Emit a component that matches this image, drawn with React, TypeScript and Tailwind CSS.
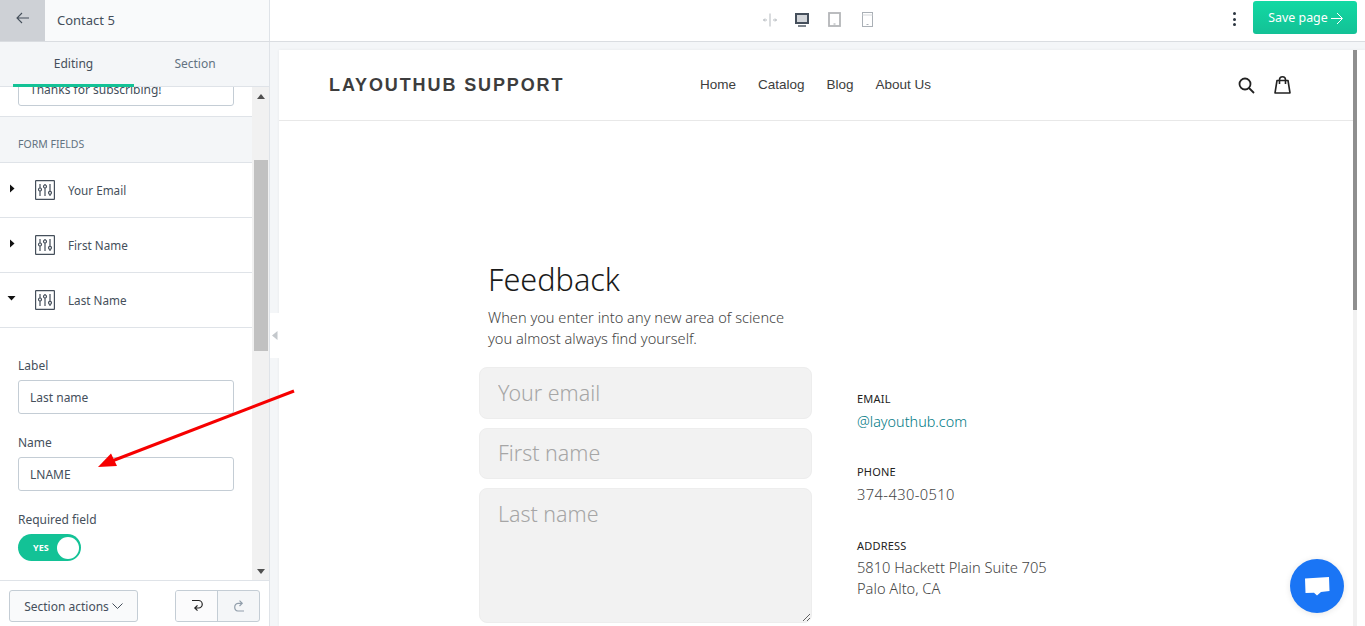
import React from "react";

const Sliders = () => (
  <svg width="20" height="20" viewBox="0 0 20 20" fill="none" stroke="#454f5b" className="shrink-0">
    <rect x="0.6" y="0.6" width="18.8" height="18.8" rx="0.5" strokeWidth="1.2" />
    <g strokeWidth="1.2">
      <path d="M5 4v4M5 11v5M10 4v1M10 8v8M15 4v7M15 14v2" />
      <circle cx="5" cy="9.5" r="1.5" />
      <circle cx="10" cy="6.5" r="1.5" />
      <circle cx="15" cy="12.8" r="1.5" />
    </g>
  </svg>
);

const Row = ({ label, open }: { label: string; open?: boolean }) => (
  <div className="flex h-[55px] items-center border-b border-[#dfe3e8]">
    <div className="flex w-[35px] shrink-0 justify-start pb-[4px] pl-[7px]">
      {open ? (
        <svg width="9" height="6" viewBox="0 0 9 6"><path d="M0.5 1h8L4.5 5.5z" fill="#111" /></svg>
      ) : (
        <svg width="6" height="9" viewBox="0 0 6 9" className="ml-[2px]"><path d="M1 0.5v8L5.5 4.5z" fill="#111" /></svg>
      )}
    </div>
    <Sliders />
    <span className="ml-[13px] pt-[2px] text-[11.7px] text-[#454f5b]">{label}</span>
  </div>
);

const TextInput = ({ value }: { value: string }) => (
  <input
    readOnly
    value={value}
    className="block h-[34px] w-[216px] rounded-[3px] border border-[#c4cdd5] bg-white px-[11px] text-[12px] text-[#454f5b] outline-none"
  />
);

const Field = ({ label, value, className }: { label: string; value: string; className?: string }) => (
  <div className={className}>
    <div className="mb-[6px] text-[12px] leading-[17px] text-[#454f5b]">{label}</div>
    <TextInput value={value} />
  </div>
);

const Info = ({ title, children, className }: { title: string; children: React.ReactNode; className?: string }) => (
  <div className={className}>
    <div className="text-[11px] font-normal leading-[16px] tracking-[0.2px] text-[#222]">{title}</div>
    {children}
  </div>
);

export default function App() {
  return (
    <div className="relative flex h-[626px] w-[1365px] flex-col overflow-hidden bg-[#f4f6f8] font-['Noto_Sans',sans-serif]">
      {/* top bar */}
      <div className="flex h-[42px] shrink-0 border-b border-[#dadde1] bg-white">
        <div className="flex w-[270px] shrink-0 items-center border-r border-[#dfe3e8] bg-[#f9fafb]">
          <div className="flex h-[41px] w-[45px] items-center justify-center bg-[#ced1d6] pb-[6px]">
            <svg width="14" height="12" viewBox="0 0 14 12" fill="none" stroke="#454f5b" strokeWidth="1.1">
              <path d="M13 6H1M6 1L1 6l5 5" />
            </svg>
          </div>
          <span className="ml-[12px] text-[13px] text-[#454f5b]">Contact 5</span>
        </div>
        <div className="flex flex-1 items-center">
          <div className="mb-[2px] ml-[493px] flex items-center">
            <svg width="14" height="14" viewBox="0 0 14 14" fill="none" stroke="#b3b8bd" strokeWidth="1">
              <path d="M7 0.5v13M0.5 7h3.5M2 5.5L0.5 7 2 8.5M13.5 7H10M12 5.5L13.5 7 12 8.5" />
            </svg>
            <svg className="ml-[18px]" width="14" height="14" viewBox="0 0 14 14">
              <rect x="1" y="1" width="12" height="9" fill="#d3d6da" stroke="#454f5b" strokeWidth="2" />
              <path d="M3 13h8" stroke="#454f5b" strokeWidth="1.4" />
            </svg>
            <svg className="ml-[19px]" width="13" height="15" viewBox="0 0 13 15">
              <rect x="1" y="1" width="11" height="13" fill="none" stroke="#b4b6b9" strokeWidth="1.8" />
              <path d="M5.5 12h2" stroke="#a0a4a8" strokeWidth="1" />
            </svg>
            <svg className="ml-[21px]" width="11" height="15" viewBox="0 0 11 15" fill="none">
              <rect x="0.5" y="0.5" width="10" height="14" stroke="#aab0b6" strokeWidth="1" />
              <path d="M0.5 3h10" stroke="#d5d8db" strokeWidth="1" />
              <path d="M4.5 12.5h2" stroke="#aab0b6" strokeWidth="1" />
            </svg>
          </div>
          <div className="ml-auto flex items-center">
            <div className="mb-[3px] flex flex-col gap-[2.5px]">
              <span className="h-[3px] w-[3px] rounded-full bg-[#2b3540]" />
              <span className="h-[3px] w-[3px] rounded-full bg-[#2b3540]" />
              <span className="h-[3px] w-[3px] rounded-full bg-[#2b3540]" />
            </div>
            <div className="mb-[7px] ml-[17px] mr-[8px] flex h-[33px] w-[104px] items-center justify-center gap-[2px] rounded-[3px] bg-gradient-to-b from-[#12d9a3] to-[#13c196] pl-[1px] pt-[2px] text-[12.4px] text-white">
              Save page
              <svg width="13" height="13" viewBox="0 0 13 13" fill="none" stroke="white" strokeWidth="1">
                <path d="M1 6.5h11M7 1l5.5 5.5L7 12" />
              </svg>
            </div>
          </div>
        </div>
      </div>

      <div className="flex min-h-0 flex-1">
        {/* sidebar */}
        <div className="flex w-[270px] shrink-0 flex-col border-r border-[#dfe3e8] bg-white">
          <div className="relative flex h-[45px] shrink-0 border-b border-[#dfe3e8] bg-[#f4f6f8] px-[13px]">
            <div className="flex w-[121px] items-center justify-center text-[12px] text-[#454f5b]">Editing</div>
            <div className="flex w-[122px] items-center justify-center text-[12px] text-[#637381]">Section</div>
            <div className="absolute bottom-[-1px] left-[13px] h-[3px] w-[121px] bg-[#13c296]" />
          </div>
          <div className="flex min-h-0 flex-1 border-b border-[#dfe3e8]">
            <div className="min-w-0 flex-1 overflow-hidden">
              <div className="px-[18px]">
                <div className="h-[19px] overflow-hidden">
                  <div className="mt-[-15px]"><TextInput value="Thanks for subscribing!" /></div>
                </div>
              </div>
              <div className="mt-[10px] flex h-[47px] items-center border-y border-[#dfe3e8] bg-[#f4f6f8] px-[18px] pt-[11px] text-[10.5px] text-[#637381]">
                FORM FIELDS
              </div>
              <Row label="Your Email" />
              <Row label="First Name" />
              <Row label="Last Name" open />
              <div className="px-[18px] pt-[29px]">
                <Field label="Label" value="Last name" />
                <Field className="mt-[20px]" label="Name" value="LNAME" />
                <div className="mt-[20px] text-[12px] leading-[17px] text-[#454f5b]">Required field</div>
                <div className="mt-[6px] flex h-[27px] w-[63px] items-center rounded-full bg-[#13c296] pl-[15px] pr-[2px]">
                  <span className="text-[9px] font-bold text-white">YES</span>
                  <span className="ml-auto h-[22px] w-[22px] rounded-full bg-white" />
                </div>
              </div>
            </div>
            <div className="flex w-[17px] shrink-0 flex-col items-center bg-[#f1f1f1]">
              <svg className="mt-[7px]" width="8" height="5" viewBox="0 0 8 5"><path d="M0 5h8L4 0z" fill="#505050" /></svg>
              <div className="mt-[61px] h-[191px] w-[14px] bg-[#c1c1c1]" />
              <svg className="mb-[6px] mt-auto" width="8" height="5" viewBox="0 0 8 5"><path d="M0 0h8L4 5z" fill="#505050" /></svg>
            </div>
          </div>
          <div className="flex h-[45px] shrink-0 items-start bg-white pl-[9px] pt-[9px]">
            <div className="flex h-[32px] w-[129px] items-center justify-center gap-[3px] rounded-[3px] border border-[#c4cdd5] bg-[#f9fafb] pt-[1px] text-[12px] text-[#454f5b]">
              Section actions
              <svg width="11" height="7" viewBox="0 0 11 7" fill="none" stroke="#454f5b" strokeWidth="1"><path d="M0.5 0.5l5 5 5-5" /></svg>
            </div>
            <div className="ml-[37px] flex h-[32px] w-[85px] overflow-hidden rounded-[3px] border border-[#c4cdd5] bg-[#f4f6f8]">
              <div className="flex w-[42px] items-center justify-center border-r border-[#c4cdd5] bg-[#fbfbfc]">
                <svg width="12" height="14" viewBox="0 0 12 14" fill="none" stroke="#222" strokeWidth="1.2">
                  <path d="M1 1.5h6.5a3.6 3.6 0 0 1 0 7.5H4M6.5 6.3L3.8 9l2.7 2.7" />
                </svg>
              </div>
              <div className="flex flex-1 items-center justify-center">
                <svg width="12" height="14" viewBox="0 0 12 14" fill="none" stroke="#919eab" strokeWidth="1.2">
                  <path d="M11 12H5a3.9 3.9 0 0 1 0-7.7h4M6.5 1.6L9.2 4.3 6.5 7" />
                </svg>
              </div>
            </div>
          </div>
        </div>

        {/* canvas */}
        <div className="relative flex min-w-0 flex-1">
          <div className="absolute left-0 top-[271px] flex h-[45px] w-[9px] items-center justify-center bg-white">
            <svg width="6" height="9" viewBox="0 0 6 9"><path d="M5.5 0v9L0 4.5z" fill="#c4c8cc" /></svg>
          </div>
          <div className="ml-[9px] mt-[8px] flex min-w-0 flex-1 bg-white shadow-[0_0_3px_rgba(0,0,0,0.06)]">
            <div className="min-w-0 flex-1 overflow-hidden">
              <div className="flex h-[71px] items-center border-b border-[#e8e8e8] pl-[50px] pr-[62px] font-['Liberation_Sans',sans-serif]">
                <div className="w-[371px] shrink-0 text-[18px] font-bold tracking-[1.88px] text-[#3d3d3d]">LAYOUTHUB SUPPORT</div>
                <div className="flex gap-[22px] text-[13.5px] text-[#3d3d3d]">
                  <span>Home</span>
                  <span>Catalog</span>
                  <span>Blog</span>
                  <span>About Us</span>
                </div>
                <div className="ml-auto flex items-center gap-[19px]">
                  <svg width="17" height="17" viewBox="0 0 17 17" fill="none" stroke="#222" strokeWidth="1.8">
                    <circle cx="7" cy="7" r="5.5" />
                    <path d="M11 11l5 5" />
                  </svg>
                  <svg width="17" height="18" viewBox="0 0 17 18" fill="none" stroke="#222" strokeWidth="1.6">
                    <path d="M3 4.5h11l2 12.5H1z" strokeLinejoin="round" />
                    <path d="M5.5 8V3.8a3 3 0 0 1 6 0V8" />
                  </svg>
                </div>
              </div>
              <div className="flex pl-[200px]">
                <div className="w-[333px] shrink-0">
                  <div className="pl-[9px] pt-[137px]">
                    <h1 className="text-[30.6px] font-light leading-[42px] text-[#1a1a1a]">Feedback</h1>
                    <p className="mt-[7px] text-[14.6px] font-light leading-[21px] text-[#444]">
                      When you enter into any new area of science
                      <br />
                      you almost always find yourself.
                    </p>
                  </div>
                  <div className="mt-[18px] flex flex-col gap-[9px] text-[21.4px] font-light">
                    <input
                      readOnly
                      placeholder="Your email"
                      className="block h-[52px] w-[333px] rounded-[8px] border border-[#ededed] bg-[#f2f2f2] px-[18px] pb-[1px] outline-none placeholder:text-[#a6a6a6]"
                    />
                    <input
                      readOnly
                      placeholder="First name"
                      className="block h-[51px] w-[333px] rounded-[8px] border border-[#ededed] bg-[#f2f2f2] px-[18px] pb-[3px] outline-none placeholder:text-[#a6a6a6]"
                    />
                    <textarea
                      readOnly
                      placeholder="Last name"
                      className="block h-[135px] w-[333px] rounded-[8px] border border-[#ededed] bg-[#f2f2f2] px-[18px] py-[9px] outline-none placeholder:text-[#a6a6a6]"
                    />
                  </div>
                </div>
                <div className="ml-[45px] pt-[270px] text-[14.65px] font-light leading-[21px] text-[#444]">
                  <Info title="EMAIL">
                    <div className="mt-[4px] text-[14.4px] text-[#007a85]">@layouthub.com</div>
                  </Info>
                  <Info title="PHONE" className="mt-[32px]">
                    <div className="mt-[4px] tracking-[0.4px]">374-430-0510</div>
                  </Info>
                  <Info title="ADDRESS" className="mt-[33px]">
                    <div className="mt-[3px]">5810 Hackett Plain Suite 705</div>
                    <div>Palo Alto, CA</div>
                  </Info>
                </div>
              </div>
            </div>
            <div className="w-[12px] shrink-0 bg-white">
              <div className="h-[260px] w-[4px] bg-[#8f8f8f]" />
              <div className="h-full w-[4px] bg-[#f1f1f1]" />
            </div>
          </div>
        </div>
      </div>

      {/* chat bubble */}
      <div className="absolute left-[1290px] top-[559px] flex h-[54px] w-[54px] items-center justify-center rounded-full bg-[#1a75f5] shadow-[0_1px_6px_rgba(0,0,0,0.1)]">
        <svg width="26" height="22" viewBox="0 0 26 22"><path d="M1 3.5l24-1.5 0.5 14-8.5 1-4 3.5-3-2.8-8.5 0.3z" fill="white" /></svg>
      </div>

      {/* annotation arrow */}
      <svg className="pointer-events-none absolute left-0 top-0" width="1365" height="626" viewBox="0 0 1365 626" fill="none">
        <path d="M294 391L112 461" stroke="#f60000" strokeWidth="3" />
        <path d="M98 467L111 453.5L117 466z" fill="#f60000" />
      </svg>
    </div>
  );
}
